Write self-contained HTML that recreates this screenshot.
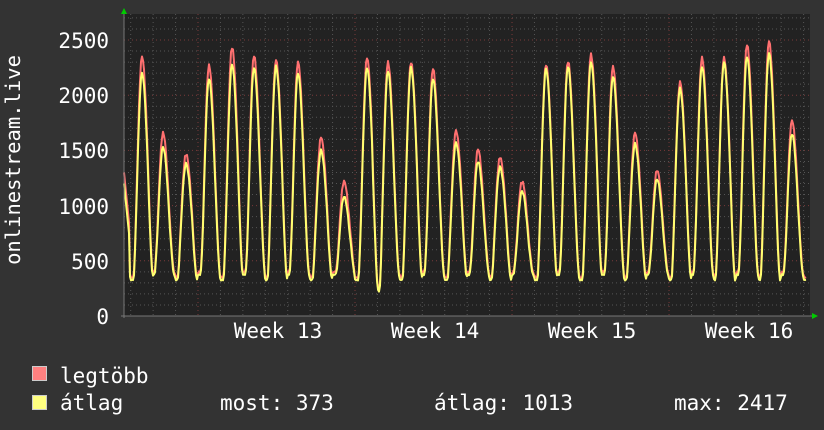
<!DOCTYPE html>
<html><head><meta charset="utf-8">
<style>
html,body{margin:0;padding:0;background:#333;}
body{width:824px;height:430px;overflow:hidden;position:relative;font-family:"DejaVu Sans Mono","Liberation Mono",monospace;color:#fff;}
svg{position:absolute;left:0;top:0;}
</style></head><body>
<svg id="g" width="824" height="430" xmlns="http://www.w3.org/2000/svg" font-family="DejaVu Sans Mono, Liberation Mono, monospace" fill="#fff">
<rect x="0" y="0" width="824" height="430" fill="#333"/>
<rect x="124" y="14" width="686" height="302" fill="#222"/>
<g id="grid"></g>
<g id="data"></g>
<line x1="121" y1="316" x2="814" y2="316" stroke="#777" stroke-width="1"/>
<line x1="124" y1="12" x2="124" y2="318" stroke="#777" stroke-width="1"/>
<polygon points="121,14 127,14 124,8" fill="#0c0"/>
<polygon points="812,313 812,319 818,316" fill="#0c0"/>
<g font-size="21" text-anchor="end">
<text x="109" y="48">2500</text>
<text x="109" y="103">2000</text>
<text x="109" y="158">1500</text>
<text x="109" y="214">1000</text>
<text x="109" y="269">500</text>
<text x="109" y="324">0</text>
</g>
<text transform="translate(20,160) rotate(-90)" font-size="20.5" text-anchor="middle">onlinestream.live</text>
<g font-size="21" text-anchor="middle">
<text x="278" y="338">Week 13</text>
<text x="435" y="338">Week 14</text>
<text x="592" y="338">Week 15</text>
<text x="749" y="338">Week 16</text>
</g>
<rect x="32.5" y="366.5" width="14" height="14" fill="#ff8080" stroke="#ccc"/>
<rect x="32.5" y="395.5" width="14" height="14" fill="#ffff80" stroke="#ccc"/>
<g font-size="21">
<text x="60" y="383">legtöbb</text>
<text x="60" y="410">átlag</text>
<text x="220" y="410">most: 373</text>
<text x="434" y="410">átlag: 1013</text>
<text x="674" y="410">max: 2417</text>
</g>
</svg>
<script>
var ns="http://www.w3.org/2000/svg";
function el(p,t,a){var e=document.createElementNS(ns,t);for(var k in a)e.setAttribute(k,a[k]);p.appendChild(e);return e;}
var grid=document.getElementById('grid');
// minor horizontal
for(var v=100;v<=2700;v+=100){var y=316-v*0.1104;if(y<14)break;
 el(grid,'line',{x1:124,x2:810,y1:y,y2:y,stroke:(v%500==0)?'#7a3a3a':'#555','stroke-width':1,'stroke-dasharray':'1,3'});}
// vertical day lines
for(var x=198-22.43*3;x<810;x+=22.43){
 var wk=Math.abs(((x-198)/157.0)-Math.round((x-198)/157.0))<0.02;
 el(grid,'line',{x1:x,x2:x,y1:14,y2:316,stroke:wk?'#7a3a3a':'#555','stroke-width':1,'stroke-dasharray':'1,3'});}
var peaks=[[142,2330,2200],[163,1640,1530],[186,1450,1380],[209,2250,2150],[232,2420,2280],[254,2340,2250],[276,2300,2260],[298,2280,2200],[321,1600,1500],[344,1200,1080],[367,2320,2250],[388,2280,2220],[411,2280,2250],[433,2220,2150],[456,1660,1570],[478,1490,1400],[500,1420,1350],[522,1200,1130],[546,2260,2240],[568,2290,2260],[591,2350,2300],[613,2240,2170],[635,1640,1560],[657,1300,1240],[680,2100,2060],[702,2320,2260],[724,2320,2300],[747,2440,2350],[769,2470,2380],[792,1750,1650]];
var troughs={};
function val(x,idx){
 // find nearest peak
 var best=0,bd=1e9;for(var i=0;i<peaks.length;i++){var d=Math.abs(x-peaks[i][0]);if(d<bd){bd=d;best=i;}}
 var p=peaks[best];var dx=x-p[0];
 var w=dx<0?8.5:11; var t=Math.min(1,Math.abs(dx)/w);
 var f=Math.pow(Math.cos(t*Math.PI/2),1.6);
 if(Math.abs(dx)>w)f=0;
 var tr=350+30*Math.sin(x*0.7);
 if(x>372&&x<382)tr=230;
 if(x<130)return idx==1?1300-(x-124)*90:1200-(x-124)*90;
 return tr+(p[idx]-tr)*f+ (idx==1?30*Math.abs(Math.sin(x*1.3)):10*Math.sin(x*2.1));
}
var d1='',d2='';
for(var x=124;x<=806;x++){
 var a=Math.max(val(x,1),val(x,2)+20),b=val(x,2);
 var y1=316-a*0.1104,y2=316-b*0.1104;
 d1+=(x==124?'M':'L')+x+','+y1.toFixed(1);
 d2+=(x==124?'M':'L')+x+','+y2.toFixed(1);
}
var dg=document.getElementById('data');
el(dg,'path',{d:d1,fill:'none',stroke:'#ff7070','stroke-width':2,'stroke-linejoin':'round'});
el(dg,'path',{d:d2,fill:'none',stroke:'#ffff70','stroke-width':2,'stroke-linejoin':'round'});
</script>
</body></html>
